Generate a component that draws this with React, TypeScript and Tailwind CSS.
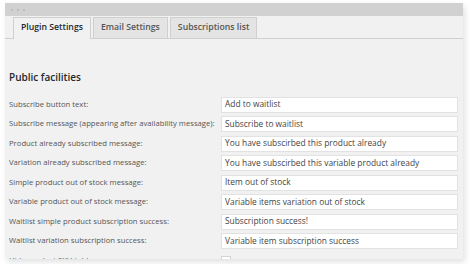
const rows: [string, string][] = [
  ["Subscribe button text:", "Add to waitlist"],
  ["Subscribe message (appearing after availability message):", "Subscribe to waitlist"],
  ["Product already subscribed message:", "You have subscirbed this product already"],
  ["Variation already subscribed message:", "You have subscirbed this variable product already"],
  ["Simple product out of stock message:", "Item out of stock"],
  ["Variable product out of stock message:", "Variable items variation out of stock"],
  ["Waitlist simple product subscription success:", "Subscription success!"],
  ["Waitlist variation subscription success:", "Variable item subscription success"],
];

export default function App() {
  return (
    <div className="w-[470px] h-[264px] bg-white overflow-hidden pl-[5px] pt-[3px] font-['Open_Sans',sans-serif]">
      <div className="w-[458px] h-[256px] bg-[#f1f1f1] overflow-hidden shadow-[2px_3px_6px_rgba(0,0,0,0.12)]">
        {/* title bar */}
        <div className="h-[13px] bg-[#d1d1d1] flex items-center gap-[4px] pl-[6px]">
          <span className="w-[2px] h-[2px] rounded-full bg-[#b4b4b4]" />
          <span className="w-[2px] h-[2px] rounded-full bg-[#b4b4b4]" />
          <span className="w-[2px] h-[2px] rounded-full bg-[#b4b4b4]" />
        </div>

        {/* tabs */}
        <div className="flex items-end h-[23px] pl-[8px] border-b border-[#cfcfcf]">
          <div className="h-[22px] px-[7px] flex items-center border border-b-0 border-[#cfcfcf] bg-[#f1f1f1] text-[8.7px] font-semibold text-[#23282d] -mb-px pb-px">
            Plugin Settings
          </div>
          <div className="ml-[2px] h-[21px] px-[7px] flex items-center border border-b-0 border-[#cfcfcf] bg-[#e4e4e4] text-[8.7px] font-semibold text-[#555]">
            Email Settings
          </div>
          <div className="ml-[2px] h-[21px] px-[7px] flex items-center border border-b-0 border-[#cfcfcf] bg-[#e4e4e4] text-[8.7px] font-semibold text-[#555]">
            Subscriptions list
          </div>
        </div>

        <div className="pl-[4px] pt-[30px]">
          <div className="text-[10px] font-semibold text-[#23282d] leading-[16px]">Public facilities</div>
          <div className="mt-[10px] flex flex-col">
            {rows.map(([label, value]) => (
              <div key={label} className="h-[19.5px] flex items-center">
                <div className="w-[212px] text-[7.7px] text-[#555] whitespace-nowrap">{label}</div>
                <div className="w-[237px] h-[16px] bg-white border border-[#e2e2e2] flex items-center px-[3px] text-[8.4px] text-[#444] whitespace-nowrap">
                  {value}
                </div>
              </div>
            ))}
            <div className="h-[19.5px] flex items-center">
              <div className="w-[212px] text-[7.7px] text-[#555] whitespace-nowrap">Hide product SKU table:</div>
              <div className="w-[10px] h-[10px] bg-white border border-[#d4d4d4]" />
            </div>
          </div>
        </div>
      </div>
    </div>
  );
}
